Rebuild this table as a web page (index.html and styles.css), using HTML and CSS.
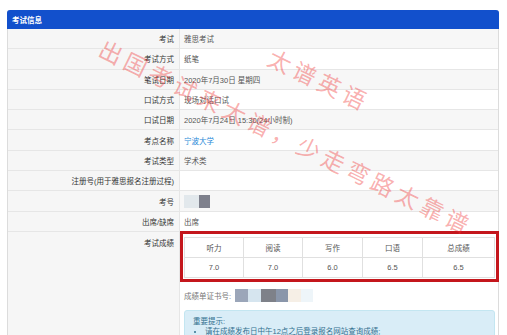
FILE: index.html
```html
<!DOCTYPE html>
<html lang="zh">
<head>
<meta charset="utf-8">
<title>考试信息</title>
<link rel="stylesheet" href="styles.css">
</head>
<body>
<div class="panel">
  <div class="panel-head">考试信息</div>
  <div class="rows">
    <div class="row odd"><div class="lbl">考试</div><div class="val">雅思考试</div></div>
    <div class="row"><div class="lbl">考试方式</div><div class="val">纸笔</div></div>
    <div class="row odd"><div class="lbl">笔试日期</div><div class="val">2020年7月30日 星期四</div></div>
    <div class="row"><div class="lbl">口试方式</div><div class="val">现场对话口试</div></div>
    <div class="row odd"><div class="lbl">口试日期</div><div class="val">2020年7月24日 15:30(24小时制)</div></div>
    <div class="row"><div class="lbl">考点名称</div><div class="val"><span class="link">宁波大学</span></div></div>
    <div class="row odd"><div class="lbl">考试类型</div><div class="val">学术类</div></div>
    <div class="row"><div class="lbl">注册号(用于雅思报名注册过程)</div><div class="val"></div></div>
    <div class="row odd"><div class="lbl">考号</div><div class="val"><span class="blur b-light"></span><span class="blur b-dark"></span></div></div>
    <div class="row"><div class="lbl">出席/缺席</div><div class="val">出席</div></div>
    <div class="row score-row">
      <div class="lbl top">考试成绩</div>
      <div class="val score-val">
        <table class="scores">
          <tr><td class="c1">听力</td><td class="c2">阅读</td><td class="c3">写作</td><td class="c4">口语</td><td class="c5">总成绩</td></tr>
          <tr><td>7.0</td><td>7.0</td><td>6.0</td><td>6.5</td><td>6.5</td></tr>
        </table>
        <div class="cert">成绩单证书号:
          <span class="cb cb1"></span><span class="cb cb2"></span><span class="cb cb3"></span><span class="cb cb4"></span><span class="cb cb5"></span><span class="cb cb6"></span>
        </div>
        <div class="alert">
          <div class="alert-title">重要提示:</div>
          <ul class="alert-list">
            <li>请在成绩发布日中午12点之后登录报名网站查询成绩;</li>
          </ul>
        </div>
        <div class="redbox"></div>
      </div>
    </div>
  </div>
</div>
<div class="wm wm1">出国考试来太谱，少走弯路太靠谱</div>
<div class="wm wm2">太谱英语</div>
</body>
</html>
```
FILE: styles.css
```css
html, body {
  margin: 0;
  padding: 0;
  background: #fff;
}
body {
  font-family: "Liberation Sans", "Noto Sans CJK SC", sans-serif;
  font-size: 7.5px;
  color: #555;
  width: 507px;
  height: 335px;
  overflow: hidden;
  position: relative;
}
.panel {
  margin: 10px 0 0 7px;
  width: 490px;
  border: 1px solid #dcdcdc;
  border-top: 0;
  border-radius: 3px 3px 0 0;
}
.panel-head {
  height: 19px;
  background: #1250cc;
  color: #fff;
  font-weight: bold;
  display: flex;
  align-items: center;
  padding-left: 5px;
  border-radius: 3px 3px 0 0;
  margin: 0 -1px;
}
.row {
  display: grid;
  grid-template-columns: 172px 1fr;
  height: 20.3px;
  border-bottom: 1px solid #e6e6e6;
  box-sizing: border-box;
}
.lbl {
  background: #f6f6f6;
  border-right: 1px solid #e6e6e6;
  text-align: right;
  padding-right: 5px;
  display: flex;
  align-items: center;
  justify-content: flex-end;
  color: #333;
}
.val {
  display: flex;
  align-items: center;
  padding-left: 4px;
}
.row.odd .val { background: #f7f7f7; }
.link { color: #2b8ad8; }
.blur {
  display: inline-block;
  height: 13px;
}
.b-light { width: 15px; background: #e2e8ec; }
.b-dark { width: 11px; background: #7e808c; }

.score-row {
  height: auto;
  border-bottom: 0;
}
.lbl.top {
  align-items: flex-start;
  padding-top: 5px;
}
.score-val {
  display: block;
  position: relative;
  padding: 5px 3px 10px 4px;
}
.scores {
  border-collapse: collapse;
  width: 311px;
  table-layout: fixed;
}
.scores td {
  border: 1px solid #e0e0e0;
  height: 19px;
  padding: 0;
  text-align: center;
  color: #555;
}
.scores .c1, .scores .c2 { width: 58px; }
.scores .c3, .scores .c4 { width: 59px; }
.cert {
  display: flex;
  align-items: center;
  margin-top: 11px;
  color: #777;
  height: 14px;
}
.cb {
  display: inline-block;
  height: 13px;
}
.cb1 { margin-left: 4px; width: 13px; background: #9ba6b9; }
.cb2 { width: 13px; background: #d6e5ef; }
.cb3 { width: 15px; background: #7e8189; }
.cb4 { width: 12px; background: #8a96aa; }
.cb5 { width: 13px; background: #f6efe6; }
.cb6 { width: 12px; background: #eef5f9; }
.alert {
  margin-top: 7px;
  background: #d9edf7;
  border: 1px solid #c3e6f1;
  border-radius: 3px;
  color: #31708f;
  padding: 5px 8px 0;
}
.alert-title { line-height: 11px; }
.alert-list {
  margin: 0;
  padding-left: 12px;
  line-height: 10px;
}
.redbox {
  position: absolute;
  left: 0;
  top: -1px;
  width: 313px;
  height: 45px;
  border: 3px solid #c4161c;
  pointer-events: none;
}
.wm {
  position: absolute;
  font-family: "Noto Sans CJK SC", sans-serif;
  font-weight: 400;
  font-size: 23px;
  line-height: 23px;
  letter-spacing: 4.5px;
  color: rgba(240, 50, 50, 0.4);
  white-space: nowrap;
  transform-origin: 11px 11px;
  transform: rotate(26deg);
  pointer-events: none;
}
.wm1 { left: 100px; top: 40px; }
.wm2 { left: 269px; top: 49px; }
```
